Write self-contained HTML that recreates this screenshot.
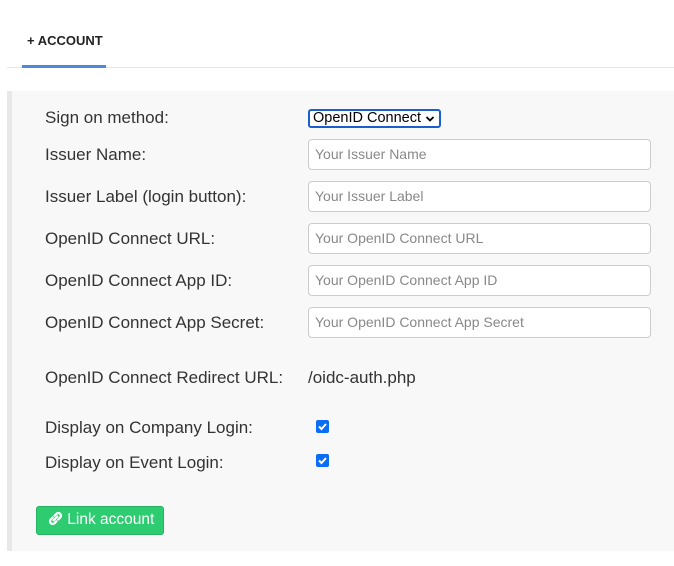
<!DOCTYPE html>
<html><head><style>
body{margin:0;width:674px;height:566px;background:#fff;font-family:"Liberation Sans",sans-serif;position:relative;overflow:hidden;color:#333}
.a{position:absolute}
.lbl{position:absolute;left:45px;font-size:17px;color:#333;line-height:20px}
.inp{position:absolute;left:308px;border:1px solid #ccc;border-radius:4px;background:#fff;font-size:14px;color:#888;line-height:29px;padding-left:6px;box-sizing:border-box;width:343px;height:31px}
.cb{position:absolute;left:316px;width:13px;height:13px;background:#0b6cf5;border-radius:2px}
</style></head><body>
<div class="a" style="left:27px;top:33px;font-size:13px;font-weight:bold;color:#222">+ ACCOUNT</div>
<div class="a" style="left:7px;top:67px;width:667px;height:1px;background:#e6e6e6"></div>
<div class="a" style="left:22px;top:65px;width:84px;height:3px;background:#4a89dc"></div>
<div class="a" style="left:7px;top:91px;width:667px;height:460px;background:#f8f8f8;border-left:5px solid #e8e8e8;box-sizing:border-box"></div>
<div class="lbl" style="top:108px">Sign on method:</div>
<div class="a" style="left:308px;top:109px;width:133px;height:19px;border:2px solid #1a5fd0;border-radius:3px;box-sizing:border-box;background:#fff;font-size:14.5px;color:#000;line-height:15px;padding-left:3px">OpenID Connect<svg width="10" height="8" style="position:absolute;right:4px;top:4px"><path d="M1.5 2l3.5 3.5 3.5-3.5" stroke="#000" stroke-width="1.8" fill="none"/></svg></div>
<div class="lbl" style="top:145px">Issuer Name:</div>
<div class="inp" style="top:139px">Your Issuer Name</div>
<div class="lbl" style="top:187px">Issuer Label (login button):</div>
<div class="inp" style="top:181px">Your Issuer Label</div>
<div class="lbl" style="top:229px">OpenID Connect URL:</div>
<div class="inp" style="top:223px">Your OpenID Connect URL</div>
<div class="lbl" style="top:271px">OpenID Connect App ID:</div>
<div class="inp" style="top:265px">Your OpenID Connect App ID</div>
<div class="lbl" style="top:313px">OpenID Connect App Secret:</div>
<div class="inp" style="top:307px">Your OpenID Connect App Secret</div>
<div class="lbl" style="top:368px">OpenID Connect Redirect URL:</div>
<div class="lbl" style="top:368px;left:308px">/oidc-auth.php</div>
<div class="lbl" style="top:418px">Display on Company Login:</div>
<div class="cb" style="top:420px"><svg width="13" height="13"><path d="M3 6.5l2.5 2.5 4.5-5" stroke="#fff" stroke-width="2" fill="none"/></svg></div>
<div class="lbl" style="top:453px">Display on Event Login:</div>
<div class="cb" style="top:454px"><svg width="13" height="13"><path d="M3 6.5l2.5 2.5 4.5-5" stroke="#fff" stroke-width="2" fill="none"/></svg></div>
<div class="a" style="left:36px;top:506px;width:128px;height:29px;background:#2ecc71;border:1px solid #27b463;border-radius:3px;box-sizing:border-box;color:#fff;font-size:15.5px;line-height:26px;padding-left:11px">
<svg width="15" height="15" viewBox="0 0 16 16" style="vertical-align:-2px"><g fill="none" stroke="#fff" stroke-width="2.4" stroke-linecap="round"><path d="M7 5l2-2a2.8 2.8 0 014 4l-2 2"/><path d="M9 11l-2 2a2.8 2.8 0 01-4-4l2-2"/><path d="M6 10l4-4"/></g></svg> Link account</div>
</body></html>
